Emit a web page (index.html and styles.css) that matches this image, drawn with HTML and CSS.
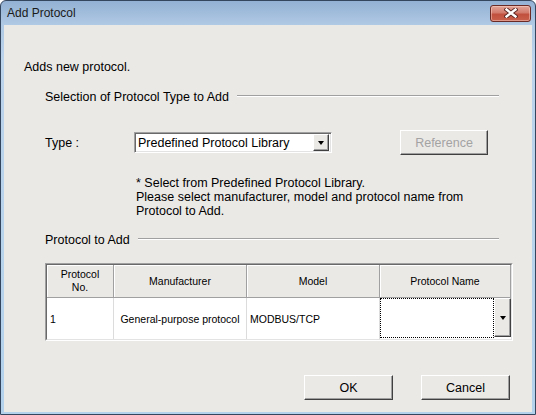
FILE: index.html
```html
<!DOCTYPE html>
<html>
<head>
<meta charset="utf-8">
<link rel="stylesheet" href="styles.css">
</head>
<body>
<div class="window">
  <div class="titlebar">
    <span class="title">Add Protocol</span>
    <div class="close">
      <svg width="14" height="10" viewBox="0 0 14 10">
        <path d="M2.5 1.5 L11.5 8.5 M11.5 1.5 L2.5 8.5" stroke="#5a2520" stroke-width="4.2" stroke-linecap="square" fill="none"/>
        <path d="M2.5 1.5 L11.5 8.5 M11.5 1.5 L2.5 8.5" stroke="#ffffff" stroke-width="2.4" stroke-linecap="square" fill="none"/>
      </svg>
    </div>
  </div>
  <div class="client">
    <p class="intro">Adds new protocol.</p>
    <div class="section">
      <div class="group-head"><span>Selection of Protocol Type to Add</span><div class="etch"></div></div>
      <div class="type-row">
        <span class="label">Type :</span>
        <div class="combo">
          <span class="combo-text">Predefined Protocol Library</span>
          <div class="drop"><i class="tri"></i></div>
        </div>
        <button class="btn btn-ref" disabled>Reference</button>
      </div>
      <p class="note">* Select from Predefined Protocol Library.<br>Please select manufacturer, model and protocol name from<br>Protocol to Add.</p>
      <div class="group-head"><span>Protocol to Add</span><div class="etch"></div></div>
      <div class="grid-frame">
        <div class="grid">
          <div class="hcell">Protocol<br>No.</div>
          <div class="hcell">Manufacturer</div>
          <div class="hcell">Model</div>
          <div class="hcell">Protocol Name</div>
          <div class="dcell">1</div>
          <div class="dcell center">General-purpose protocol</div>
          <div class="dcell">MODBUS/TCP</div>
          <div class="dcell pname">
            <div class="focus-box"></div>
            <div class="drop tall"><i class="tri"></i></div>
          </div>
        </div>
      </div>
    </div>
    <div class="footer">
      <button class="btn">OK</button>
      <button class="btn">Cancel</button>
    </div>
  </div>
</div>
</body>
</html>
```
FILE: styles.css
```css
* { box-sizing: border-box; }
html, body { margin: 0; padding: 0; }
body {
  width: 536px;
  height: 415px;
  overflow: hidden;
  background: #ffffff;
  font-family: "Liberation Sans", Arial, sans-serif;
}
.window {
  width: 536px;
  height: 415px;
  display: flex;
  flex-direction: column;
  border: 1px solid #34465e;
  border-radius: 6px 6px 0 0;
  background: linear-gradient(#93b1d4 0px, #b0c9e4 24px, #bcd4ec 60px, #b4d2ec 100%);
  padding: 0 3px 2px 3px;
}
.titlebar {
  height: 24px;
  flex: none;
  display: flex;
  align-items: center;
  justify-content: space-between;
  padding-left: 3px;
}
.title {
  font-size: 12px;
  color: #1a1a1a;
}
.close {
  width: 41px;
  height: 17px;
  margin-right: 1px;
  border: 1px solid #6a2a26;
  border-radius: 3px;
  background: linear-gradient(#e3a497 0%, #d27b6c 45%, #c1503e 55%, #c8604c 100%);
  box-shadow: inset 0 0 0 1px rgba(255, 220, 210, 0.45);
  display: flex;
  align-items: center;
  justify-content: center;
}
.close svg { display: block; }
.client {
  flex: 1;
  background: #ebe9e6;
  padding: 35px 22px 12px 20px;
  display: flex;
  flex-direction: column;
  font-size: 12.5px;
  color: #000;
}
.intro {
  margin: 0;
  line-height: 14px;
}
.section {
  padding-left: 21px;
}
.group-head {
  display: flex;
  align-items: center;
  width: 454px;
  line-height: 14px;
  margin-top: 16px;
}
.etch {
  flex: 1;
  height: 2px;
  margin-left: 8px;
  margin-bottom: 3px;
  border-top: 1px solid #a0a0a0;
  border-bottom: 1px solid #ffffff;
}
.type-row {
  display: flex;
  align-items: center;
  height: 25px;
  margin-top: 26px;
}
.label {
  width: 89px;
}
.combo {
  width: 198px;
  height: 21px;
  display: flex;
  align-items: center;
  background: #ffffff;
  border: 1px solid;
  border-color: #a0a0a0 #ffffff #ffffff #a0a0a0;
  box-shadow: inset 1px 1px 0 #696969, inset -1px -1px 0 #e3e3e3;
  padding: 2px 2px 2px 3px;
}
.combo-text {
  flex: 1;
  white-space: nowrap;
}
.drop {
  width: 16px;
  height: 17px;
  background: #ebe9e6;
  border: 1px solid;
  border-color: #ffffff #404040 #404040 #ffffff;
  box-shadow: inset -1px -1px 0 #a0a0a0;
  display: flex;
  align-items: center;
  justify-content: center;
}
.drop.tall {
  width: 17px;
  height: 39px;
}
.tri {
  display: block;
  width: 0;
  height: 0;
  border-left: 3.5px solid transparent;
  border-right: 3.5px solid transparent;
  border-top: 4px solid #000;
}
.btn {
  width: 89px;
  height: 25px;
  padding: 0;
  font-family: "Liberation Sans", Arial, sans-serif;
  font-size: 12.5px;
  color: #000;
  background: #ebe9e6;
  border: 1px solid;
  border-color: #ffffff #404040 #404040 #ffffff;
  box-shadow: inset -1px -1px 0 #a0a0a0;
}
.btn-ref {
  margin-left: 68px;
  width: 88px;
  color: #a3a3a3;
}
.note {
  margin: 21px 0 0 0;
  padding-left: 91px;
  line-height: 14px;
}
.group-head + .grid-frame { margin-top: 16px; }
.note + .group-head { margin-top: 15px; }
.grid-frame {
  width: 468px;
  border: 1px solid;
  border-color: #a0a0a0 #ffffff #ffffff #a0a0a0;
}
.grid {
  display: grid;
  grid-template-columns: 67px 133px 133px 131px;
  grid-template-rows: 33px 41px;
  border: 1px solid;
  border-color: #696969 #e3e3e3 #e3e3e3 #696969;
  background: #ffffff;
  font-size: 10.5px;
}
.hcell {
  background: #ebe9e6;
  border-right: 1px solid #a0a0a0;
  border-bottom: 1px solid #a0a0a0;
  box-shadow: inset 1px 1px 0 #ffffff;
  display: flex;
  align-items: center;
  justify-content: center;
  text-align: center;
  line-height: 13px;
}
.dcell {
  border-right: 1px solid #dcdcdc;
  display: flex;
  align-items: center;
  padding-left: 3px;
  white-space: nowrap;
}
.dcell.center {
  justify-content: center;
  padding-left: 0;
}
.dcell.pname {
  padding: 0;
  border-right: none;
  align-items: stretch;
  padding-bottom: 1px;
}
.focus-box {
  flex: 1;
  border: 1px dotted #000;
}
.footer {
  margin-top: auto;
  display: flex;
  justify-content: flex-end;
  gap: 28px;
}
```
